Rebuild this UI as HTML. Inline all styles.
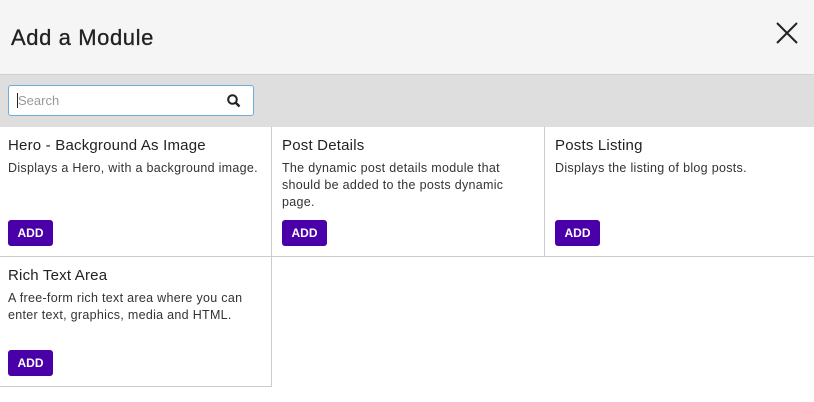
<html><head><style>
body{margin:0;width:814px;height:402px;background:#fff;font-family:"Liberation Sans",sans-serif;color:#222;position:relative;overflow:hidden}
.hdr{position:absolute;left:0;top:0;width:814px;height:74px;background:#f5f5f5;border-bottom:1px solid #d0d0d0}
.hdr h1{position:absolute;left:11px;top:25px;margin:0;font-size:22px;font-weight:normal;color:#222;letter-spacing:0.6px;-webkit-text-stroke:0.3px #222}
.band{position:absolute;left:0;top:75px;width:814px;height:52px;background:#dedede}
.search{position:absolute;left:8px;top:10px;width:244px;height:29px;background:#fff;border:1px solid #6aaee0;border-radius:3px}
.search span{position:absolute;left:9px;top:7px;font-size:13px;color:#999}
.search i{position:absolute;left:8px;top:7px;width:1px;height:15px;background:#222}
.card{position:absolute;box-sizing:border-box;border-right:1px solid #ccc;border-bottom:1px solid #ccc;height:130px}
.card h3{position:absolute;left:8px;top:10px;margin:0;font-size:15px;font-weight:normal;color:#222;letter-spacing:0.2px}
.card p{position:absolute;left:8px;top:33px;margin:0;font-size:12.5px;line-height:17px;color:#333;width:250px;letter-spacing:0.3px}
.card b{position:absolute;left:8px;bottom:10px;width:45px;height:26px;background:#4a00a8;color:#fff;border-radius:3px;font-size:12px;text-align:center;line-height:26px}
</style></head><body>
<div class="hdr"><h1>Add a Module</h1>
<svg style="position:absolute;left:776px;top:22px" width="22" height="22"><path d="M1 1L21 21M21 1L1 21" stroke="#222" stroke-width="2"/></svg></div>
<div class="band"><div class="search"><i></i><span>Search</span>
<svg style="position:absolute;left:218px;top:8px" width="14" height="14"><circle cx="5.5" cy="5.5" r="4.3" fill="none" stroke="#222" stroke-width="2"/><path d="M8.5 8.5L12.5 12.5" stroke="#222" stroke-width="2.4"/></svg></div></div>
<div class="card" style="left:0;top:127px;width:272px"><h3>Hero - Background As Image</h3><p>Displays a Hero, with a background image.</p><b>ADD</b></div>
<div class="card" style="left:272px;top:127px;width:273px"><h3 style="left:10px">Post Details</h3><p style="left:10px;width:235px">The dynamic post details module that should be added to the posts dynamic page.</p><b style="left:10px">ADD</b></div>
<div class="card" style="left:545px;top:127px;width:269px;border-right:none"><h3 style="left:10px">Posts Listing</h3><p style="left:10px">Displays the listing of blog posts.</p><b style="left:10px">ADD</b></div>
<div class="card" style="left:0;top:257px;width:272px"><h3>Rich Text Area</h3><p style="width:250px">A free-form rich text area where you can enter text, graphics, media and HTML.</p><b>ADD</b></div>
</body></html>
